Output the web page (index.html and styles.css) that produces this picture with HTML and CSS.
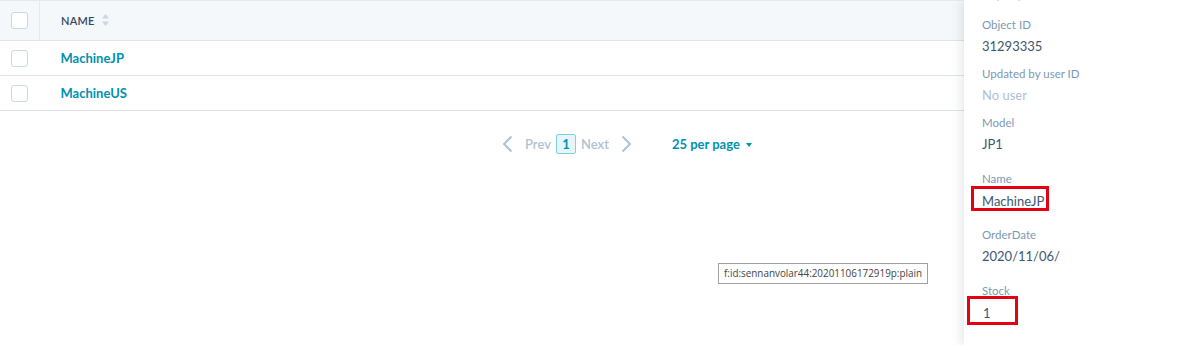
FILE: index.html
```html
<!DOCTYPE html>
<html lang="en">
<head>
    <meta charset="utf-8">
    <title>Objects</title>
    <link rel="stylesheet" href="styles.css">
</head>
<body>
    <div id="wrap">
        <div class="main">
            <table class="obj-table">
                <thead>
                    <tr>
                        <th class="col-check"><span class="chk"></span></th>
                        <th class="col-name">NAME
                            <svg class="sort" width="7" height="12" viewBox="0 0 7 12"><path d="M3.5 0L7 4.5H0z M3.5 12L0 7.5H7z" fill="#cbd6e2"/></svg>
                        </th>
                    </tr>
                </thead>
                <tbody>
                    <tr>
                        <td class="col-check"><span class="chk"></span></td>
                        <td class="col-name"><a href="#">MachineJP</a></td>
                    </tr>
                    <tr>
                        <td class="col-check"><span class="chk"></span></td>
                        <td class="col-name"><a href="#">MachineUS</a></td>
                    </tr>
                </tbody>
            </table>

            <div class="paging">
                <div class="pager">
                    <svg class="chev" width="11" height="18" viewBox="0 0 11 18"><path d="M9.5 1.5L2 9l7.5 7.5" fill="none" stroke="#b0c1d4" stroke-width="2"/></svg>
                    <span class="pg-tx prev">Prev</span>
                    <span class="pg-num">1</span>
                    <span class="pg-tx next">Next</span>
                    <svg class="chev" width="11" height="18" viewBox="0 0 11 18"><path d="M1.5 1.5L9 9l-7.5 7.5" fill="none" stroke="#b0c1d4" stroke-width="2"/></svg>
                </div>
                <a href="#" class="per-page">25 per page <span class="caret"></span></a>
            </div>

            <div class="img-title">f:id:sennanvolar44:20201106172919p:plain</div>
        </div>

        <aside class="panel">
            <div class="cut-value">11/06/2020 3:26 PM GMT+9</div>
            <dl class="field">
                <dt>Object ID</dt>
                <dd>31293335</dd>
            </dl>
            <dl class="field">
                <dt>Updated by user ID</dt>
                <dd class="empty">No user</dd>
            </dl>
            <dl class="field edit">
                <dt>Model</dt>
                <dd>JP1</dd>
            </dl>
            <dl class="field edit">
                <dt>Name</dt>
                <dd><span class="mark mark-name">MachineJP</span></dd>
            </dl>
            <dl class="field edit">
                <dt>OrderDate</dt>
                <dd>2020/11/06/</dd>
            </dl>
            <dl class="field edit">
                <dt>Stock</dt>
                <dd><span class="mark mark-stock">1</span></dd>
            </dl>
        </aside>
    </div>
</body>
</html>
```

FILE: styles.css
```css
@charset 'utf-8';
html,body,p,ul,li,dl,dt,dd,table,th,td { margin:0; padding:0; }
html, body { height:100%; }
body { background-color:#fff; font-size:13px; font-family:Lato, 'Noto Sans', sans-serif; color:#33475b; overflow:hidden; }
a { text-decoration:none; color:inherit; }

#wrap { display:flex; height:345px; }
.main { position:relative; flex:1; min-width:0; }

/* table */
.obj-table { width:100%; border-collapse:collapse; border-top:1px solid #e5eaf0; }
.obj-table th { height:39px; background-color:#f5f8fa; border-bottom:1px solid #dfe3eb; text-align:left; font-size:11px; font-weight:600; color:#33475b; letter-spacing:.2px; }
.obj-table td { height:34px; border-bottom:1px solid #dfe3eb; }
.obj-table .col-check { width:39px; padding:0; text-align:center; }
.obj-table th.col-check { border-right:1px solid #e5eaf0; }
.obj-table .col-name { padding-left:21px; }
.obj-table td.col-name a { font-size:13px; font-weight:700; color:#0091ae; }
.chk { display:inline-block; width:15px; height:15px; border:1px solid #cbd6e2; border-radius:3px; background:#fff; vertical-align:middle; }
.sort { margin-left:5px; vertical-align:-1px; }

/* paging */
.paging { display:flex; align-items:center; margin-top:23px; padding-left:502px; }
.pager { display:flex; align-items:center; }
.chev { display:block; }
.pg-tx { font-size:13px; font-weight:600; color:#b0c1d4; }
.pg-tx.prev { margin:0 5px 0 12px; }
.pg-tx.next { margin:0 12px 0 5px; }
.pg-num { width:18px; height:18px; line-height:18px; border:1px solid #7fd1de; border-radius:2px; background:#e5f5f8; text-align:center; font-size:13px; font-weight:700; color:#0091ae; }
.per-page { margin-left:40px; font-size:13px; font-weight:700; color:#0091ae; }
.caret { display:inline-block; margin-left:3px; border-left:3.5px solid transparent; border-right:3.5px solid transparent; border-top:4px solid #0091ae; vertical-align:2px; }

/* image title tooltip */
.img-title { position:absolute; left:718px; top:263px; padding:3px 5px 3px 5px; border:1px solid #a0a0a0; background:#fff; font-family:'Open Sans', sans-serif; font-size:9.9px; line-height:13px; color:#444; white-space:nowrap; }

/* side panel */
.panel { position:relative; z-index:10; width:218px; padding-left:18px; background:#fff; box-shadow:-3px 0 9px rgba(45,62,80,.12); }
.cut-value { margin-top:-12px; height:27px; line-height:15px; font-size:13px; color:#516f90; white-space:nowrap; }
.field { height:49px; }
.field.edit { height:56px; }
.field dt { height:20px; line-height:20px; font-size:11.5px; color:#7c98b6; }
.field dd { line-height:22px; font-size:13px; color:#3d5670; }
.field dd.empty { color:#b0c1d4; }
.mark { display:block; box-sizing:border-box; border:3px solid #e50012; line-height:19px; }
.mark-name { width:78px; height:25px; margin:-3px 0 0 -11px; padding:3px 0 0 8px; }
.mark-stock { width:51px; height:29px; margin:-5px 0 0 -15px; padding:5px 0 0 13px; }
```
